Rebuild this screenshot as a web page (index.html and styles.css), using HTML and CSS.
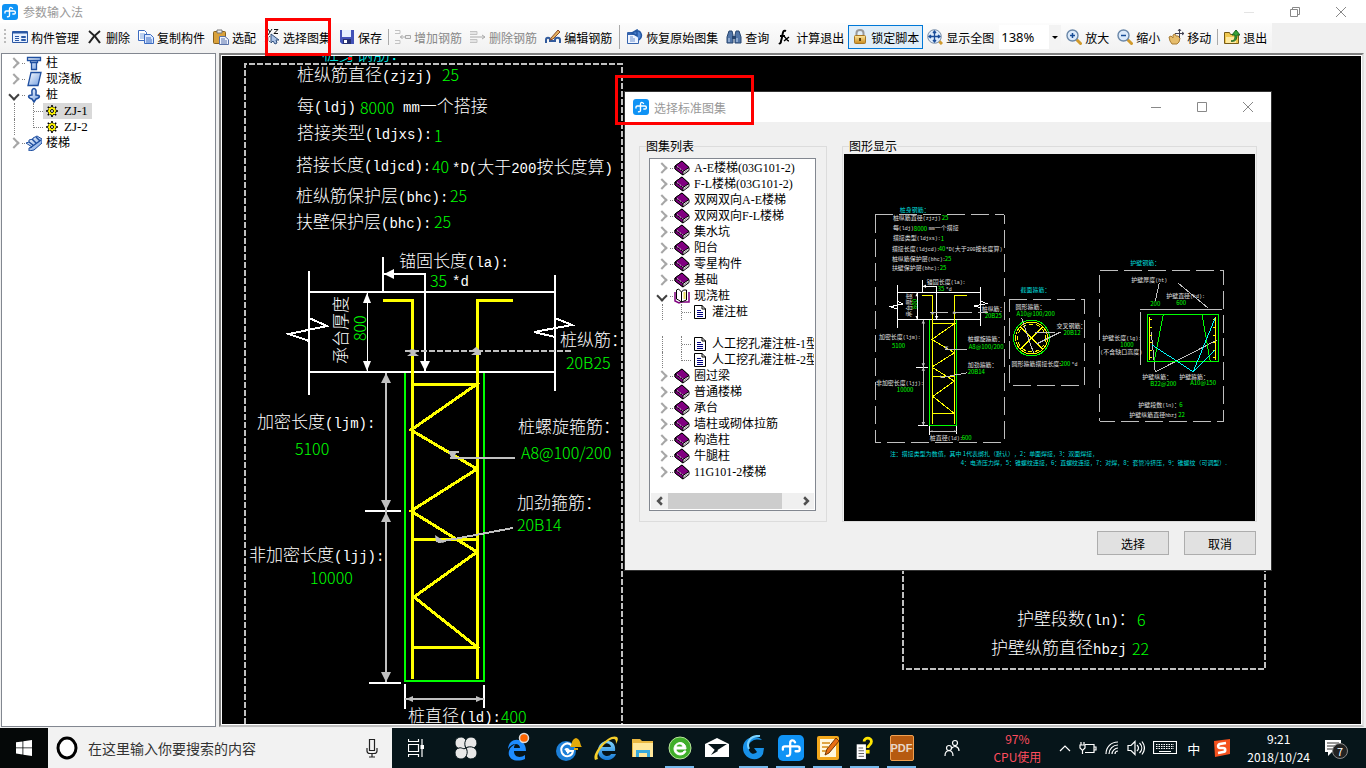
FILE: index.html
```html
<!DOCTYPE html>
<html lang="zh-CN">
<head>
    <meta charset="UTF-8">
    <meta name="viewport" content="width=device-width, initial-scale=1.0"/>
    <title>参数输入法</title>
    <link rel="stylesheet" href="styles.css">
</head>
<body>
<!--shared symbols-->
<svg class="defs" aria-hidden="true">
  <defs>
    <linearGradient id="blueGrad" x1="0" y1="0" x2="1" y2="1"><stop offset="0" stop-color="#fff"/><stop offset="1" stop-color="#6f9ce0"/></linearGradient>
    <linearGradient id="goldGrad" x1="0" y1="0" x2="0" y2="1"><stop offset="0" stop-color="#ffe9a0"/><stop offset="1" stop-color="#c98a1c"/></linearGradient>
    <linearGradient id="ieGrad" x1="0" y1="0" x2="0" y2="1"><stop offset="0" stop-color="#7fd4ff"/><stop offset="1" stop-color="#1377d4"/></linearGradient>
    <symbol id="logo" viewBox="0 0 16 16">
      <rect width="16" height="16" rx="3" fill="#0f93f5"/>
      <path d="M10.500 4.500C9.500 2.800 7.500 3 7.500 5v6c0 1.500-.8 2-2 1.800M3 9V8c0-.8.500-1 1.200-1H12c1 0 1.300.400 1.300 1.200v.8c0 .7-.4 1-1 1h-1.500" fill="none" stroke="#fff" stroke-width="1.400" stroke-linecap="round"/>
    </symbol>
    <symbol id="book" viewBox="0 0 16 16">
      <path d="M1 6l7-5 7 6.500v3L9 15 1 9z" fill="#fff" stroke="#000"/>
      <path d="M1 6l7-5 7 6.500-6 4z" fill="#800080" stroke="#000"/>
      <path d="M1 6v3l8 6v-3.500z" fill="#800080" stroke="#000"/>
      <path d="M3 6.500l6 4.500" stroke="#fff" stroke-dasharray="1 1"/>
      <path d="M10 12.500l5-3.300" stroke="#999"/>
    </symbol>
    <symbol id="bookOpen" viewBox="0 0 16 16">
      <path d="M1 4v9l4 2 2-1h8V4" fill="#fff" stroke="#800080" stroke-width="1.500"/>
      <path d="M2.500 2l2-1 3 3v10l-3-2-2-1zM7.500 4l2-2h3v10l-5 2z" fill="#fff" stroke="#000"/>
      <path d="M10.500 4v7" stroke="#e8e060" stroke-width="2"/>
    </symbol>
    <symbol id="page" viewBox="0 0 12 14">
      <path d="M.5.500H8L11.500 4v9.500H.500z" fill="#fff" stroke="#000"/><path d="M8 0v4h4" fill="none" stroke="#000"/>
      <path d="M3 5.500h4M3 7.500h6M3 9.500h6M3 11.500h6" stroke="#000080"/>
    </symbol>
    <symbol id="gear" viewBox="0 0 12 12">
      <path d="M6 0v12M0 6h12M1.800 1.800l8.400 8.400M10.200 1.800l-8.400 8.400" stroke="#000" stroke-width="1.600"/>
      <circle cx="6" cy="6" r="4" fill="#ffee00" stroke="#000" stroke-dasharray="2 1"/>
      <path d="M6 2v8M2 6h8M3 3l6 6M9 3L3 9" stroke="#ff0" stroke-width="1"/><circle cx="6" cy="6" r="1.500" fill="#fff" stroke="#000"/>
    </symbol>
    <symbol id="magnifier" viewBox="0 0 16 16">
      <path d="M10 10l4.500 4.500" stroke="#d19a2c" stroke-width="3" stroke-linecap="round"/>
      <circle cx="6.500" cy="6.500" r="5.500" fill="#dceafa" stroke="#6a87a8" stroke-width="1.400"/>
    </symbol>

    <!--pile elevation, linework only-->
    <g id="pile">
      <g class="white">
        <path d="M309 271v124M555 275v116M309 292h246M309 372h246"/>
        <path d="M309 318l18 8-38 8 20 7M555 318l17 7-38 7 21 5"/>
        <path d="M383 257v35M425 372v-98h-42"/>
        <path d="M365 511h36M369 683h32M405 684v25M484 685v23"/>
      </g>
      <path class="white thin" d="M367.500 293v78"/>
      <path class="fillwhite" d="M384 274l10-5v10zM425 371l-5-10h10zM367 293l-4 10h8zM367 371l-4-10h8z"/>
      <path class="green" d="M405 373v308h79V373"/>
      <path class="yellow" d="M383 300h29v379M513 300h-36v379M412 384h65l-66 46 66 39-66 42 66 41-63 45 63 50-66 1M412 539h65"/>
      <g class="gray">
        <path d="M386 373v309M405 699h79M515 458h-65M513 528l-75 14"/>
      </g>
      <path class="fillgray" d="M386 373l-5 10h10zM386 510l-5-10h10zM386 512l-5 10h10zM386 682l-5-10h10zM406 699l7-3v6zM483 699l-7-3v6zM448 451h11v2h-3l-1 3 3 3h-6zM435 535l6 4 3 4-8-1zM407 351l5-2 7 2-4 2 4 3h-12l4-3zM471 351l5-4 5 4v4h-10l4-3z"/>
    </g>
  </defs>
</svg>

<div class="app">
  <!--title bar-->
  <header class="titlebar">
    <svg class="app-icon"><use href="#logo"/></svg>
    <h1>参数输入法</h1>
    <div class="win-buttons">
      <button type="button" class="faint" aria-label="最小化"><svg viewBox="0 0 12 12"><path d="M1 6.500h10"/></svg></button>
      <button type="button" aria-label="还原"><svg viewBox="0 0 12 12"><path d="M1.500 3.500h7v7h-7zM3.500 3V1.500h7v7H9"/></svg></button>
      <button type="button" aria-label="关闭"><svg viewBox="0 0 12 12"><path d="M1 1l10 10M11 1L1 11"/></svg></button>
    </div>
  </header>

  <!--toolbar-->
  <div class="toolbar-row">
  <nav class="toolbar">
    <span class="grip"></span>
    <button type="button"><svg viewBox="0 0 16 16"><path d="M.5 2.500h15v11H.500z" fill="#e8f1ff" stroke="#2b58a5"/><path d="M1 3.500h14" stroke="#2b58a5" stroke-width="2"/><path d="M3 7.500h4M3 9.500h4M3 11.500h4" stroke="#2b58a5"/><path d="M9.500 7.500h4v1h-4zM9.500 10.500h4v1h-4z" fill="none" stroke="#2b58a5"/></svg>构件管理</button>
    <button type="button"><svg viewBox="0 0 16 16"><path d="M2 2c4 3 8 7 11 12M13 2C9 5 5 9 2 14" fill="none" stroke="#222" stroke-width="2"/></svg>删除</button>
    <button type="button"><svg viewBox="0 0 16 16"><path d="M.5 1.500h6l2 2v8h-8z" fill="#fff" stroke="#3b6bc0"/><path d="M2 5h5M2 7h5M2 9h5" stroke="#7ba2df"/><path d="M6.500 5.500h6l3 3v6h-9z" fill="#dbe8ff" stroke="#3b6bc0"/><path d="M8 9h5M8 11h6M8 13h6" stroke="#3b6bc0"/></svg>复制构件</button>
    <button type="button"><svg viewBox="0 0 16 16"><rect x=".5" y="2.500" width="12" height="12" rx="1" fill="#d9a13b" stroke="#87601b"/><path d="M4 1h5v3H4z" fill="#eee" stroke="#777"/><path d="M6.500 7.500H12l3.500 3v5h-9z" fill="#eef3ff" stroke="#5871a8"/><path d="M8 10h4M8 12h6M8 14h6" stroke="#5871a8"/></svg>选配</button>
    <button type="button"><svg viewBox="0 0 16 16"><path d="M4 0l2 3M8 0L4 6M10 .5h4l-4 4h4" fill="none" stroke="#111"/><path d="M3.500 5v9M1 7l5 6M1 13l5-6" stroke="#456" stroke-dasharray="2 1"/><path d="M7 5v9l2-2 2 3 2-1-1-3h3z" fill="#a9c1e6" stroke="#33527d"/></svg>选择图集</button>
    <button type="button"><svg viewBox="0 0 16 16"><path d="M1 1h14v14H3l-2-2z" fill="#4252b8"/><path d="M3 1h9v7H3z" fill="#e5efff"/><path d="M4 10h8v5H4z" fill="#26306f"/><path d="M5 11h3v3H5z" fill="#fff"/></svg>保存</button>
    <span class="sep"></span>
    <button type="button" disabled><svg viewBox="0 0 16 16"><path d="M0 1.500h5v3H0M0 11.500h5v3H0" fill="none" stroke="#c3c3c3"/><path d="M5 8h5M7.500 6l-2 2 2 2" fill="none" stroke="#aaa"/><path d="M10.500 6.500h5v3h-5z" fill="#eee" stroke="#aaa"/></svg>增加钢筋</button>
    <button type="button" disabled><svg viewBox="0 0 16 16"><path d="M0 2.500h7v3H0M0 10.500h7v3H0" fill="#e5e5e5" stroke="#c3c3c3"/><path d="M0 8h15M12 6l3 2-3 2" fill="none" stroke="#aaa"/></svg>删除钢筋</button>
    <button type="button"><svg viewBox="0 0 16 16"><path d="M1 14v-3c0-3 4-3 4 0v1h5v-1c0-3 5-3 5 0v3" fill="none" stroke="#315a9c" stroke-width="2"/><path d="M6 9l7-8 2 2-7 7-3 1z" fill="#e4b25e" stroke="#8d4b2d"/></svg>编辑钢筋</button>
    <span class="sep wide"></span>
    <button type="button"><svg viewBox="0 0 16 16"><path d="M.5 3.500h11v11H.500z" fill="#eef4ff" stroke="#3664ad"/><path d="M1 5h10" stroke="#3664ad" stroke-width="2"/><path d="M3 8h3M3 10h5M3 12h5" stroke="#6c92cf"/><path d="M8 3c5-4 9 4 4 8M5 4l5-3v6z" fill="#4d83d1" stroke="#2457a2" stroke-width="1.500"/></svg>恢复原始图集</button>
    <button type="button"><svg viewBox="0 0 16 16"><path d="M3 2h3l1 4v8H1V8zM10 2h3l2 6v6H9V6z" fill="#5276a8" stroke="#27456f"/><path d="M6 7h4v3H6z" fill="#27456f"/><path d="M3 9v4M11 9v4" stroke="#c9dbf3"/></svg>查询</button>
    <button type="button"><svg viewBox="0 0 16 16"><path d="M9 2C5 0 6 7 4 12c0 2-1 3-2 2M3 7h5" fill="none" stroke="#000" stroke-width="2"/><path d="M7 8c2-1 2 4 5 4M12 8l-5 4" fill="none" stroke="#000" stroke-width="1.500"/></svg>计算退出</button>
    <button type="button" class="locked" aria-pressed="true"><svg viewBox="0 0 16 16"><path d="M4.500 7V4c0-4 7-4 7 0v3" fill="none" stroke="#999" stroke-width="2"/><rect x="2.500" y="6.500" width="11" height="8" rx="1" fill="url(#goldGrad)" stroke="#a87724"/><path d="M8 9v3" stroke="#61440e" stroke-width="2"/></svg>锁定脚本</button>
    <button type="button"><svg viewBox="0 0 16 16"><path d="M12 12l3 3" stroke="#d19a2c" stroke-width="3"/><circle cx="7.500" cy="7.500" r="6.800" fill="#dceafa" stroke="#7b8fa8"/><path d="M7.500 2v11M2 7.500h11M6 4l1.500-2L9 4M6 11l1.500 2L9 11M4 6L2 7.500 4 9M11 6l2 1.500L11 9" fill="none" stroke="#1a4c99" stroke-width="1.300"/></svg>显示全图</button>
    <span class="combo">
      <select aria-label="缩放比例"><option>138%</option></select>
      <svg viewBox="0 0 12 24"><path d="M3 11h6l-3 3z"/></svg>
    </span>
    <button type="button"><svg viewBox="0 0 16 16"><use href="#magnifier"/><path d="M6.500 4v5M4 6.500h5" stroke="#174c96" stroke-width="1.500"/></svg>放大</button>
    <button type="button"><svg viewBox="0 0 16 16"><use href="#magnifier"/><path d="M4 6.500h5" stroke="#174c96" stroke-width="1.500"/></svg>缩小</button>
    <button type="button"><svg viewBox="0 0 16 16"><path d="M1 8l2-1 2 2V6l2-1 1 2 2 0 2 2-1 4-2 2H4L2 12z" fill="#e6bd6c" stroke="#a87c34"/><path d="M11.500 0v9M7 4.500h9M10 2l1.500-2L13 2M14 3l2 1.500L14 6" fill="none" stroke="#445"/></svg>移动</button>
    <span class="sep"></span>
    <button type="button"><svg viewBox="0 0 16 16"><path d="M.5 3.500h5l1 2h8v9H.500z" fill="#f1c850" stroke="#765b16"/><path d="M2 8h10v6H2z" fill="#ffeaa0"/><path d="M7 12c4 0 4-3 4-6H8l4-5 4 5h-3c0 5-2 7-6 6z" fill="#37a437" stroke="#17621c"/></svg>退出</button>
  </nav>
  <div class="mark mark-toolbar"></div>
  </div>

  <main class="workspace">
    <!--component tree-->
    <aside class="sidebar">
      <ul class="tree">
        <li><button type="button" class="chev" aria-label="展开"></button><span class="dots"></span><svg class="ico" viewBox="0 0 16 16"><path d="M1.500 2.500h13v3h-13zM4.500 5.500h7v2h-7zM5.500 7.500h5v7h-5z" fill="url(#blueGrad)" stroke="#1f4fa0" stroke-width="1.300"/></svg><span>柱</span></li>
        <li><button type="button" class="chev" aria-label="展开"></button><span class="dots"></span><svg class="ico" viewBox="0 0 16 16"><path d="M5 1.500h10l-3 13H2z" fill="url(#blueGrad)" stroke="#1f4fa0" stroke-width="1.300"/></svg><span>现浇板</span></li>
        <li><button type="button" class="chev open" aria-label="折叠"></button><span class="dots"></span><svg class="ico" viewBox="0 0 16 16"><path d="M6 6c-1-6 5-6 4 0v2c5 0 4 3 0 4l-2 3-2-3c-4-1-5-4 0-4z" fill="url(#blueGrad)" stroke="#1f4fa0" stroke-width="1.500"/></svg><span>桩</span></li>
        <li class="child"><span class="guide"></span><span class="branch"></span><a href="#" class="leaf selected"><svg class="ico small"><use href="#gear"/></svg>ZJ-1</a></li>
        <li class="child last"><span class="guide"></span><span class="branch"></span><a href="#" class="leaf"><svg class="ico small"><use href="#gear"/></svg>ZJ-2</a></li>
        <li><button type="button" class="chev" aria-label="展开"></button><span class="dots"></span><svg class="ico" viewBox="0 0 16 16"><path d="M0 8l3-1V5l4-1V3l4-2 5 3v4l-8 7-5 1v-3l3-1z" fill="url(#blueGrad)" stroke="#1f4fa0"/><path d="M3 7l4 3M6 4l4 4M10 2l4 4M4 13l11-8" stroke="#1f4fa0" stroke-width="1.500"/></svg><span>楼梯</span></li>
      </ul>
    </aside>

    <!--drawing area-->
    <section class="canvas">
      <svg class="drawing" viewBox="222 56 1144 668" aria-label="桩身配筋图">
        <path class="dash" d="M245 740V64h377v676M903 400v269h362V400"/>
        <use href="#pile"/>
        <path class="dash" d="M405 351h166"/>
        <g class="label">
          <text class="cyan" x="322" y="60">桩身钢筋：</text>
          <text x="297" y="81">桩纵筋直径<tspan class="en">(zjzj)</tspan></text>
          <text x="297" y="112">每<tspan class="en">(ldj)</tspan></text>
          <text x="403" y="112"><tspan class="en">mm</tspan>一个搭接</text>
          <text x="297" y="139">搭接类型<tspan class="en">(ldjxs):</tspan></text>
          <text x="296" y="171">搭接长度<tspan class="en">(ldjcd):</tspan></text>
          <text x="452" y="173"><tspan class="en">*D(</tspan>大于<tspan class="en">200</tspan>按长度算<tspan class="en">)</tspan></text>
          <text x="296" y="202">桩纵筋保护层<tspan class="en">(bhc):</tspan></text>
          <text x="296" y="228">扶壁保护层<tspan class="en">(bhc):</tspan></text>
          <text x="399" y="267">锚固长度<tspan class="en">(la):</tspan></text>
          <text x="452" y="286"><tspan class="en">*d</tspan></text>
          <text transform="translate(347 364) rotate(-90)">承台厚度</text>
          <text x="560" y="346">桩纵筋：</text>
          <text x="257" y="428">加密长度<tspan class="en">(ljm):</tspan></text>
          <text x="518" y="433">桩螺旋箍筋：</text>
          <text x="517" y="509">加劲箍筋：</text>
          <text x="249" y="561">非加密长度<tspan class="en">(ljj):</tspan></text>
          <text x="408" y="722">桩直径<tspan class="en">(ld):</tspan></text>
          <text x="1017" y="625">护壁段数<tspan class="en">(ln)</tspan>：</text>
          <text x="991" y="654">护壁纵筋直径<tspan class="en">hbzj</tspan></text>
        </g>
        <g class="value">
          <text x="442" y="81">25</text>
          <text x="360" y="114">8000</text>
          <text x="434" y="142">1</text>
          <text x="432" y="173">40</text>
          <text x="450" y="202">25</text>
          <text x="434" y="228">25</text>
          <text x="430" y="287">35</text>
          <text transform="translate(366 341) rotate(-90)">800</text>
          <text x="566" y="369">20B25</text>
          <text x="295" y="455">5100</text>
          <text x="521" y="459">A8@100/200</text>
          <text x="517" y="531">20B14</text>
          <text x="310" y="584">10000</text>
          <text x="501" y="723">400</text>
          <text x="1137" y="626">6</text>
          <text x="1132" y="655">22</text>
        </g>
        <path class="reddot" d="M348 57h4v3h-4z"/>
      </svg>
    </section>
  </main>

  <!--atlas dialog-->
  <div class="dialog" role="dialog" aria-labelledby="dlgTitle">
    <div class="dialog-title">
      <svg class="app-icon"><use href="#logo"/></svg>
      <h2 id="dlgTitle">选择标准图集</h2>
      <div class="win-buttons">
        <button type="button" aria-label="最小化"><svg viewBox="0 0 12 12"><path d="M1 6.500h10"/></svg></button>
        <button type="button" aria-label="最大化"><svg viewBox="0 0 12 12"><path d="M1.500 1.500h9v9h-9z"/></svg></button>
        <button type="button" aria-label="关闭"><svg viewBox="0 0 12 12"><path d="M1 1l10 10M11 1L1 11"/></svg></button>
      </div>
    </div>
    <div class="dialog-body">
      <fieldset class="group list-group">
        <legend>图集列表</legend>
        <div class="listbox">
          <ul class="tree">
            <li><button type="button" class="chev" aria-label="展开"></button><span class="dots"></span><svg class="ico"><use href="#book"/></svg><span>A-E楼梯(03G101-2)</span></li>
            <li><button type="button" class="chev" aria-label="展开"></button><span class="dots"></span><svg class="ico"><use href="#book"/></svg><span>F-L楼梯(03G101-2)</span></li>
            <li><button type="button" class="chev" aria-label="展开"></button><span class="dots"></span><svg class="ico"><use href="#book"/></svg><span>双网双向A-E楼梯</span></li>
            <li><button type="button" class="chev" aria-label="展开"></button><span class="dots"></span><svg class="ico"><use href="#book"/></svg><span>双网双向F-L楼梯</span></li>
            <li><button type="button" class="chev" aria-label="展开"></button><span class="dots"></span><svg class="ico"><use href="#book"/></svg><span>集水坑</span></li>
            <li><button type="button" class="chev" aria-label="展开"></button><span class="dots"></span><svg class="ico"><use href="#book"/></svg><span>阳台</span></li>
            <li><button type="button" class="chev" aria-label="展开"></button><span class="dots"></span><svg class="ico"><use href="#book"/></svg><span>零星构件</span></li>
            <li><button type="button" class="chev" aria-label="展开"></button><span class="dots"></span><svg class="ico"><use href="#book"/></svg><span>基础</span></li>
            <li><button type="button" class="chev open" aria-label="折叠"></button><span class="dots"></span><svg class="ico"><use href="#bookOpen"/></svg><span>现浇桩</span></li>
            <li class="child"><span class="guide"></span><span class="branch"></span><a href="#" class="leaf"><svg class="ico page"><use href="#page"/></svg>灌注桩</a></li>
            <li class="blank"></li>
            <li class="child"><span class="guide"></span><span class="branch"></span><a href="#" class="leaf"><svg class="ico page"><use href="#page"/></svg>人工挖孔灌注桩-1型</a></li>
            <li class="child last"><span class="guide"></span><span class="branch"></span><a href="#" class="leaf"><svg class="ico page"><use href="#page"/></svg>人工挖孔灌注桩-2型</a></li>
            <li><button type="button" class="chev" aria-label="展开"></button><span class="dots"></span><svg class="ico"><use href="#book"/></svg><span>圈过梁</span></li>
            <li><button type="button" class="chev" aria-label="展开"></button><span class="dots"></span><svg class="ico"><use href="#book"/></svg><span>普通楼梯</span></li>
            <li><button type="button" class="chev" aria-label="展开"></button><span class="dots"></span><svg class="ico"><use href="#book"/></svg><span>承台</span></li>
            <li><button type="button" class="chev" aria-label="展开"></button><span class="dots"></span><svg class="ico"><use href="#book"/></svg><span>墙柱或砌体拉筋</span></li>
            <li><button type="button" class="chev" aria-label="展开"></button><span class="dots"></span><svg class="ico"><use href="#book"/></svg><span>构造柱</span></li>
            <li><button type="button" class="chev" aria-label="展开"></button><span class="dots"></span><svg class="ico"><use href="#book"/></svg><span>牛腿柱</span></li>
            <li><button type="button" class="chev" aria-label="展开"></button><span class="dots"></span><svg class="ico"><use href="#book"/></svg><span>11G101-2楼梯</span></li>
          </ul>
          <div class="hscroll">
            <button type="button" aria-label="向左"><svg viewBox="0 0 8 8"><path d="M5.500 1l-3 3 3 3"/></svg></button>
            <div class="track"><div class="thumb"></div></div>
            <button type="button" aria-label="向右"><svg viewBox="0 0 8 8"><path d="M2.500 1l3 3-3 3"/></svg></button>
          </div>
        </div>
      </fieldset>

      <fieldset class="group view-group">
        <legend>图形显示</legend>
        <svg class="preview" viewBox="844 154 412 367" aria-label="图集预览">
          <path class="frame" d="M875.500 214.500h129v228h-129zM1009.500 299.500h76v86h-76zM1100.500 270.500h124v151h-124z"/>
          <use href="#pile" transform="translate(791.500 192.400) scale(.342)"/>
          <path class="frame" d="M930 312.500h58"/>
          <!--round section-->
          <circle class="green" cx="1032" cy="338" r="18"/>
          <circle class="yellow" cx="1032" cy="338" r="16"/>
          <circle class="yellow rebar" cx="1032" cy="338" r="14"/>
          <path class="yellow" d="M1021 327l22 22M1043 327l-22 22"/>
          <path class="gray" d="M1022 318l12 35M1056 332h-21M1061 332l-24 12"/>
          <!--wall section-->
          <path class="gray" d="M1141 309.500h82M1141.500 312v53M1160 283l-4 18M1179 283l30 25M1152 332l4 40 62-32"/>
          <path class="green" d="M1148.500 314.500h71v47h-71zM1164 315l-9 46M1203 315l8 46"/>
          <path class="yellow" d="M1150.500 317v43M1216.500 317v43"/>
          <path class="yellow" d="M1151 319h2M1151 327h2M1151 335h2M1151 343h2M1151 351h2M1151 358h2M1214 319h2M1214 327h2M1214 335h2M1214 343h2M1214 351h2M1214 358h2"/>
          <path class="cyanline" d="M1153 345l41 27 22-54M1194 372l22-22"/>
          <g class="label">
            <text x="893" y="220">桩纵筋直径<tspan class="en">(zjzj)</tspan></text>
            <text x="893" y="230">每<tspan class="en">(ldj)</tspan></text>
            <text x="929" y="230"><tspan class="en">mm</tspan>一个搭接</text>
            <text x="893" y="240">搭接类型<tspan class="en">(ldjxs):</tspan></text>
            <text x="892" y="251">搭接长度<tspan class="en">(ldjcd):</tspan></text>
            <text x="946" y="251"><tspan class="en">*D(</tspan>大于<tspan class="en">200</tspan>按长度算<tspan class="en">)</tspan></text>
            <text x="892" y="261">桩纵筋保护层<tspan class="en">(bhc):</tspan></text>
            <text x="892" y="270">扶壁保护层<tspan class="en">(bhc):</tspan></text>
            <text x="927" y="284">锚固长度<tspan class="en">(la):</tspan></text>
            <text x="946" y="291"><tspan class="en">*d</tspan></text>
            <text transform="translate(911 317) rotate(-90)">承台厚度</text>
            <text x="982" y="311">桩纵筋：</text>
            <text x="879" y="339">加密长度<tspan class="en">(ljm):</tspan></text>
            <text x="968" y="341">桩螺旋箍筋：</text>
            <text x="968" y="367">加劲箍筋：</text>
            <text x="876" y="385">非加密长度<tspan class="en">(ljj):</tspan></text>
            <text x="930" y="440">桩直径<tspan class="en">(ld):</tspan></text>
            <text x="1016" y="309">圆形箍筋：</text>
            <text x="1057" y="328">交叉钢筋：</text>
            <text x="1012" y="366">圆形箍筋搭接长度:</text>
            <text x="1072" y="366"><tspan class="en">*d</tspan></text>
            <text x="1132" y="282">护壁厚度<tspan class="en">(ht)</tspan></text>
            <text x="1167" y="298">护壁直径<tspan class="en">(kd):</tspan></text>
            <text x="1103" y="340">护壁长度<tspan class="en">(lg):</tspan></text>
            <text x="1101" y="354"><tspan class="en">(</tspan>不含缺口高度<tspan class="en">)</tspan></text>
            <text x="1143" y="379">护壁纵筋：</text>
            <text x="1180" y="379">护壁箍筋：</text>
            <text x="1139" y="407">护壁段数<tspan class="en">(ln)</tspan>：</text>
            <text x="1130" y="417">护壁纵筋直径<tspan class="en">hbzj</tspan></text>
          </g>
          <g class="value">
            <text x="942" y="220">25</text>
            <text x="914" y="231">8000</text>
            <text x="941" y="241">1</text>
            <text x="939" y="251">40</text>
            <text x="945" y="261">25</text>
            <text x="940" y="270">25</text>
            <text x="938" y="291">35</text>
            <text transform="translate(917 309) rotate(-90)">800</text>
            <text x="985" y="318">20B25</text>
            <text x="892" y="348">5100</text>
            <text x="969" y="349">A8@100/200</text>
            <text x="968" y="374">20B14</text>
            <text x="897" y="392">10000</text>
            <text x="962" y="440">600</text>
            <text x="1017" y="316">A10@100/200</text>
            <text x="1064" y="335">20B12</text>
            <text x="1061" y="366">200</text>
            <text x="1151" y="306">200</text>
            <text x="1177" y="305">600</text>
            <text x="1121" y="347">1000</text>
            <text x="1151" y="386">B22@200</text>
            <text x="1191" y="385">A10@150</text>
            <text x="1180" y="407">6</text>
            <text x="1179" y="417">22</text>
          </g>
          <g class="note">
            <text x="900" y="212">桩身钢筋：</text>
            <text x="1021" y="292">截面箍筋：</text>
            <text x="1131" y="265">护壁钢筋：</text>
            <text x="890" y="456">注：搭接类型为数值，其中 1代表绑扎（默认），2：单面焊接，3：双面焊接，</text>
            <text x="961" y="465">4：电渣压力焊，5：锥螺纹连接，6：直螺纹连接，7：对焊，8：套管冷挤压，9：锥螺纹（可调型）.</text>
          </g>
        </svg>
      </fieldset>
    </div>
    <div class="dialog-actions">
      <button type="button">选择</button>
      <button type="button">取消</button>
    </div>
  </div>
  <div class="mark mark-dialog"></div>

  <!--taskbar-->
  <footer class="taskbar">
    <button type="button" class="start" aria-label="开始"><svg width="16" height="16" viewBox="0 0 16 16"><path d="M0 2.300l6.500-.9v6.100H0zM7.300 1.300L16 0v7.500H7.300zM0 8.300h6.500v6.200L0 13.600zM7.300 8.300H16V16l-8.700-1.300z" fill="#fff"/></svg></button>
    <label class="search">
      <svg width="22" height="26" viewBox="0 0 22 26"><ellipse cx="11" cy="13" rx="9" ry="10" fill="#fff" stroke="#000" stroke-width="3"/></svg>
      <input type="text" placeholder="在这里输入你要搜索的内容" aria-label="搜索">
      <svg width="12" height="20" viewBox="0 0 12 20"><path d="M3.500 1.500h5v11h-5zM1 10v3c0 1.500 1 2.500 3 2.500h4c2 0 3-1 3-2.500v-3M6 16v3M3 19h6" fill="none" stroke="#222" stroke-width="1.200"/></svg>
    </label>
    <button type="button" class="task first" aria-label="任务视图"><svg width="16" height="18" viewBox="0 0 16 18"><path d="M.5 0v2.500h10V0M.500 5.500h10v7H.500zM.500 18v-2.500h10V18M14 0v18" fill="none" stroke="#fff" stroke-width="1.200"/><path d="M12.500 6h3.500v4h-3.500z" fill="#fff"/></svg></button>
    <button type="button" class="task wide" aria-label="风扇"><svg width="24" height="24" viewBox="0 0 24 24"><g fill="#e8e8e8" stroke="#06151a"><path d="M12 12C7 15 1 12 1 7c0-7 10-8 11-2 1 3-2 4 0 7z"/><path d="M12 12C9 7 12 1 17 1c7 0 8 10 2 11-3 1-4-2-7 0z"/><path d="M12 12c5-3 11 0 11 5 0 7-10 8-11 2-1-3 2-4 0-7z"/><path d="M12 12c3 5 0 11-5 11-7 0-8-10-2-11 3-1 4 2 7 0z"/></g></svg></button>
    <button type="button" class="task wide" aria-label="Edge"><svg width="24" height="32" viewBox="0 0 24 32"><path d="M2 17C3 4 20 5 20 19H8c0 7 7 7 11 4v4C10 31 1 27 3 19c1-4 4-6 7-7-2 1-2 3-2 4h6c0-5-8-6-12 1z" fill="#1e8cff"/><circle cx="18" cy="6" r="4.500" fill="#f60" stroke="#ddd" stroke-width="1.500"/></svg></button>
    <span class="gap"></span>
    <button type="button" class="task" aria-label="浏览器"><svg width="28" height="30" viewBox="0 0 28 30"><circle cx="11" cy="18" r="10" fill="#1c7fd8"/><path d="M17 13c-5-6-13 0-10 7 3 5 10 4 11-2h-7M10 17c3-3 6 2 2 3" fill="none" stroke="#fff" stroke-width="2"/><path d="M15 14c2-1 1-8 6-9 5 1 4 8 6 9zM19 15h4v2h-4z" fill="#e5ab09"/></svg></button>
    <button type="button" class="task" aria-label="Internet Explorer"><svg width="26" height="28" viewBox="0 0 26 28"><path d="M22 17H9c0 6 8 6 9 3h5c-4 10-19 7-18-4C6 4 24 4 22 17zM9 13h9c-1-5-8-5-9 0z" fill="url(#ieGrad)"/><path d="M2 26C-2 19 16-1 24 3c2 2 0 5-1 7 0-3 0-5-3-5C13 6 2 20 5 25z" fill="#f5cf2c"/></svg></button>
    <button type="button" class="task" aria-label="文件资源管理器"><svg width="22" height="20" viewBox="0 0 22 20"><path d="M0 1h8l2 2h11v16H0z" fill="#e9b741"/><path d="M1 5h20v14H1z" fill="#ffe79a"/><path d="M4 19v-7h14v7h-3v-4H7v4z" fill="#38a9dc"/></svg></button>
    <button type="button" class="task running" aria-label="360浏览器"><svg width="24" height="24" viewBox="0 0 24 24"><circle cx="12" cy="12" r="11" fill="#3fae2a" stroke="#b7e59b"/><path d="M18 13H8c0 5 7 5 8 2h2c-2 6-12 5-12-2 0-8 12-9 12 0zM8 11h7c-1-4-6-4-7 0z" fill="#fff" stroke="#fff"/></svg></button>
    <button type="button" class="task" aria-label="邮件"><svg width="24" height="20" viewBox="0 0 24 20"><path d="M0 6l12-6 12 6v13H0z" fill="#fff"/><path d="M3 6h19L11 13z" fill="#06151a"/><path d="M11 10l2 3-7 4z" fill="#06151a"/></svg></button>
    <button type="button" class="task running" aria-label="广联达"><svg width="24" height="26" viewBox="0 0 24 26"><path d="M20 5C16 0 2 1 1 12c-1 12 15 17 20 7l1-6H12l3 4c-5 5-10-2-8-7 2-6 9-6 13-5z" fill="#1891e8"/><path d="M18 1C8 0 4 8 7 14" fill="none" stroke="#7ad2ff" stroke-width="2"/></svg></button>
    <button type="button" class="task running" aria-label="参数输入法"><svg width="26" height="26"><use href="#logo"/></svg></button>
    <button type="button" class="task running" aria-label="记事"><svg width="24" height="26" viewBox="0 0 24 26"><rect x="1" y="1" width="22" height="24" rx="2" fill="#f3a81c"/><path d="M4 4h16v18H4z" fill="#fff8dc"/><path d="M6 8h8M6 12h6M6 16h5" stroke="#d58b11" stroke-width="1.500"/><path d="M9 20l2-6L20 3l3 3-10 12z" fill="#e86f14" stroke="#753500"/></svg></button>
    <button type="button" class="task running" aria-label="帮助"><svg width="20" height="24" viewBox="0 0 20 26"><path d="M1 9h10v16H1z" fill="#fff"/><path d="M3 13h5M3 16h6M3 19h6M3 22h6" stroke="#555"/><path d="M9 6c0-5 8-5 8 0 0 4-4 4-4 7" fill="none" stroke="#ffe600" stroke-width="3"/><path d="M11 15h4v4h-4z" fill="#ffe600"/></svg></button>
    <button type="button" class="task running pdf" aria-label="PDF"><span>PDF</span></button>

    <div class="tray">
      <button type="button" class="people" aria-label="人脉"><svg width="16" height="18" viewBox="0 0 16 18"><g fill="none" stroke="#fff" stroke-width="1.200"><circle cx="5" cy="9" r="2.500"/><path d="M1 17c0-7 8-7 8 0"/><circle cx="11" cy="4" r="2.500"/><path d="M8 9c3-3 7-1 7 3"/></g></svg></button>
      <div class="cpu"><span>97%</span><span>CPU使用</span></div>
      <button type="button" aria-label="显示隐藏的图标"><svg width="12" height="8" viewBox="0 0 12 8"><path d="M1 7l5-5 5 5" class="line"/></svg></button>
      <button type="button" aria-label="电池"><svg width="18" height="14" viewBox="0 0 18 14"><path d="M6 3.500h9v8H6M15 6h2v3h-2M2 1v3M5 1v3M1 4h5v3L4 9H3L1 7zM3.500 9v4" class="line"/></svg></button>
      <button type="button" aria-label="网络"><svg width="14" height="14" viewBox="0 0 14 14"><path d="M1 13C1 6 6 1 13 1M4 13c0-5 4-9 9-9M7 13c0-3 3-6 6-6M10 13c0-2 1-3 3-3" class="line"/></svg></button>
      <button type="button" aria-label="音量"><svg width="18" height="16" viewBox="0 0 18 16"><path d="M1 5.500h3l4-4v13l-4-4H1zM10 5c2 2 2 4 0 6M12.500 3c3 3 3 7 0 10M15 1.500c3 4 3 9 0 13" class="line"/></svg></button>
      <button type="button" aria-label="键盘"><svg width="24" height="14" viewBox="0 0 24 14"><path d="M.5.500h23v12H.500zM6 10.500h12" class="line"/><path d="M3 3.500h18M3 5.500h18M3 7.500h18" class="line" stroke-dasharray="1.500 1"/></svg></button>
      <button type="button" class="ime">中</button>
      <button type="button" aria-label="搜狗输入法"><svg width="16" height="18" viewBox="0 0 16 18"><path d="M0 2l16-2v15L1 18z" fill="#f4511e"/><path d="M12 4L6 5c-3 1-2 4 0 4h3c3 0 3 4 0 4l-5 1" fill="none" stroke="#fff" stroke-width="2.500"/></svg></button>
      <time class="clock"><span>9:21</span><span>2018/10/24</span></time>
      <button type="button" class="notice" aria-label="通知"><svg width="18" height="18" viewBox="0 0 18 18"><path d="M1 1h16v12H8l-4 4v-4H1z" fill="#fff"/><path d="M3 4h12M3 7h12M3 10h7" stroke="#333"/></svg><span class="badge">7</span></button>
    </div>
  </footer>
</div>
</body>
</html>
```
FILE: styles.css
```css
* {
  box-sizing: border-box;
}
body {
  margin: 0;
  font-family: "Noto Sans CJK SC", sans-serif;
  font-size: 12px;
  color: #000;
  background: #f0f0f0;
}
button {
  border: 0;
  padding: 0;
  background: none;
  font: inherit;
  color: inherit;
}
h1, h2 {
  margin: 0;
  font-size: 12px;
  font-weight: 400;
  color: #999;
}
.defs {
  position: absolute;
  width: 0;
  height: 0;
}
.app {
  position: relative;
  display: flex;
  flex-direction: column;
  height: 100vh;
  overflow: hidden;
}

/* title bars */
.titlebar {
  display: flex;
  align-items: center;
  height: 23px;
  padding: 0 2px;
  background: #fff;
}
.app-icon {
  width: 16px;
  height: 16px;
  margin-right: 5px;
}
.win-buttons {
  display: flex;
  margin-left: auto;
}
.win-buttons button {
  display: flex;
  justify-content: center;
  width: 46px;
}
.win-buttons svg {
  width: 12px;
  height: 12px;
  fill: none;
  stroke: #888;
}
.win-buttons .faint svg { stroke: #e4e4e4; }

/* toolbar */
.toolbar-row {
  position: relative;
  display: flex;
  height: 30px;
}
.toolbar {
  display: flex;
  align-items: center;
  padding: 0 1px 2px 4px;
  background: linear-gradient(#fcfcfc, #f1f1f1);
}
.toolbar button {
  display: flex;
  align-items: center;
  gap: 3px;
  height: 24px;
  padding: 0 3px;
  border: 1px solid transparent;
  white-space: nowrap;
}
.toolbar button svg {
  width: 16px;
  height: 16px;
}
.toolbar button:disabled { color: #888; }
.toolbar .locked {
  border-color: #0078d7;
  background: #e0eef9;
}
.grip {
  width: 2px;
  height: 16px;
  margin-right: 2px;
  background: repeating-linear-gradient(#bbb 0 2px, transparent 2px 4px);
}
.sep {
  width: 1px;
  height: 16px;
  margin: 0 2px;
  background: #aaa;
}
.sep.wide {
  height: 24px;
  margin: 0 3px;
}
.combo {
  position: relative;
  display: flex;
  width: 62px;
  height: 24px;
  margin: 0 1px;
  background: #fff;
}
.combo select {
  width: 100%;
  border: 0;
  padding: 0 2px;
  appearance: none;
  background: none;
  font: 13px "Noto Sans", sans-serif;
}
.combo svg {
  position: absolute;
  top: 0;
  right: 0;
  width: 12px;
  height: 24px;
  background: #f3f3f3;
}

/* red marker frames */
.mark {
  position: absolute;
  z-index: 3;
  border: 3px solid #f00;
}
.mark-toolbar {
  left: 265px;
  top: -5px;
  width: 66px;
  height: 38px;
}
.mark-dialog {
  left: 615px;
  top: 75px;
  width: 139px;
  height: 50px;
}

/* workspace */
.workspace {
  display: flex;
  flex: 1;
  gap: 3px;
  min-height: 0;
  padding: 0 2px 1px 1px;
}
.sidebar {
  width: 215px;
  border: 1px solid #828790;
  padding-top: 1px;
  background: #fff;
}
.canvas {
  flex: 1;
  min-width: 0;
  overflow: hidden;
  border: 2px solid #808080;
  border-right-color: #e0e0e0;
  border-bottom-color: #c0c0c0;
  outline: 1px solid #fff;
  outline-offset: -3px;
  padding: 1px;
  background: #000;
}
.drawing {
  display: block;
  width: 1144px;
  height: 668px;
}

/* trees */
.tree {
  margin: 0;
  padding: 0;
  list-style: none;
  font-family: "Liberation Serif", "Noto Sans CJK SC", serif;
  line-height: 16px;
}
.tree li {
  display: flex;
  align-items: center;
  height: 16px;
  padding-left: 7px;
  white-space: nowrap;
}
.tree li > * { flex-shrink: 0; }
.chev {
  display: flex;
  justify-content: center;
  width: 10px;
}
.chev::before {
  content: "";
  width: 6px;
  height: 6px;
  border: solid #a6a6a6;
  border-width: 2px 2px 0 0;
  transform: rotate(45deg);
}
.chev.open::before {
  border-color: #404040;
  transform: rotate(135deg);
}
.dots {
  width: 3px;
  margin: 0 1px 0 3px;
  border-top: 1px dotted #808080;
}
.ico {
  width: 16px;
  height: 16px;
  margin-right: 4px;
}
.guide {
  width: 1px;
  height: 16px;
  margin-left: 5px;
  border-left: 1px dotted #808080;
}
.branch {
  align-self: flex-start;
  width: 10px;
  height: 16px;
  margin-left: 18px;
  border-left: 1px dotted #808080;
  background: repeating-linear-gradient(90deg, #808080 0 1px, transparent 1px 2px) 0 8px / 100% 1px no-repeat;
}
.last .branch { height: 9px; }
.leaf {
  display: flex;
  align-items: center;
  height: 16px;
  padding: 0 4px 0 3px;
  color: #000;
  text-decoration: none;
}
.leaf.selected { background: #d9d9d9; }
.ico.small {
  width: 12px;
  height: 12px;
  margin-right: 6px;
}
.sidebar .leaf { font-size: 13px; }
.ico.page {
  width: 12px;
  height: 14px;
  margin-right: 6px;
}

/* drawing pens */
.drawing, .preview {
  --pen: 2px;
  --bar: 3px;
  --fine: 1px;
  --ink: #fff;
  --mark: #0f0;
  --size: 17px;
  --ensize: 14px;
  --numsize: 16px;
  --weight: 300;
}
.preview {
  --pen: 1px;
  --bar: 1px;
  --ink: #e0e0e0;
  --mark: #0f0;
  --size: 6px;
  --ensize: 5px;
  --numsize: 6px;
  --weight: 400;
}
.white, .gray, .green, .yellow, .dash, .frame, .cyanline {
  fill: none;
  stroke-width: var(--pen);
  shape-rendering: crispEdges;
}
.white *, .gray *, .white, .gray, .green, .yellow { vector-effect: non-scaling-stroke; }
.white { stroke: #fff; }
.thin { stroke-width: var(--fine); }
.gray { stroke: #c0c0c0; }
.green { stroke: #0f0; }
.yellow { stroke: #ff0; stroke-width: var(--bar); }
.cyanline { stroke: #0ff; }
.rebar { stroke-dasharray: 4 3; }
.fillwhite { fill: #fff; }
.fillgray { fill: #c0c0c0; }
.dash { stroke: #c0c0c0; stroke-dasharray: 6 2; }
.frame { stroke: #c0c0c0; stroke-dasharray: 18 6; }
.reddot { fill: #f00; }
.label, .note { fill: var(--ink); font-size: var(--size); font-weight: var(--weight); }
.value { fill: var(--mark); font-size: var(--numsize); font-weight: var(--weight); }
.en { font-family: "Liberation Mono", monospace; font-size: var(--ensize); }
.note { fill: #00dcdc; }
.cyan { fill: #0ff; }

/* dialog */
.dialog {
  position: absolute;
  left: 624px;
  top: 91px;
  display: flex;
  flex-direction: column;
  width: 648px;
  border: 1px solid #333;
  background: #f0f0f0;
}
.dialog-title {
  display: flex;
  align-items: center;
  height: 30px;
  padding-left: 8px;
  background: #fff;
}
.dialog-body {
  display: flex;
  gap: 15px;
  padding: 16px 14px 0;
}
.group {
  min-width: 0;
  height: 384px;
  margin: 0;
  padding: 0;
  border: 1px solid #dcdcdc;
}
.group legend {
  height: 16px;
  padding: 0;
  line-height: 16px;
}
.list-group {
  width: 188px;
  padding: 4px 10px 9px 9px;
}
.list-group legend { margin-left: -3px; }
.view-group {
  flex: 1;
  padding: 0 1px;
}
.view-group legend { margin-left: 5px; }
.listbox {
  display: flex;
  flex-direction: column;
  height: 353px;
  border: 1px solid #828790;
  padding: 1px;
  overflow: hidden;
  background: #fff;
}
.listbox .tree {
  flex: 1;
  overflow: hidden;
}
.listbox .tree li { padding-left: 6px; }
.hscroll {
  display: flex;
  height: 16px;
  background: #f0f0f0;
}
.hscroll button {
  display: flex;
  align-items: center;
  justify-content: center;
  width: 17px;
}
.hscroll svg {
  width: 10px;
  height: 10px;
  fill: none;
  stroke: #505050;
  stroke-width: 2;
}
.track { flex: 1; }
.thumb {
  width: 88%;
  height: 16px;
  background: #cdcdcd;
}
.preview {
  display: block;
  width: 100%;
  height: 367px;
  background: #000;
}
.dialog-actions {
  display: flex;
  justify-content: flex-end;
  gap: 15px;
  padding: 9px 15px 15px;
}
.dialog-actions button {
  width: 72px;
  height: 24px;
  border: 1px solid #adadad;
  background: #e1e1e1;
}

/* taskbar */
.taskbar {
  display: flex;
  height: 40px;
  color: #fff;
  background: #06151a;
}
.taskbar button {
  display: flex;
  align-items: center;
  justify-content: center;
}
.start {
  width: 48px;
  background: #050808;
}
.search {
  display: flex;
  align-items: center;
  width: 344px;
  padding: 0 14px 0 8px;
  background: #f2f2f2;
}
.search input {
  flex: 1;
  min-width: 0;
  border: 0;
  padding: 0 10px;
  background: none;
  font: 14px "Noto Sans CJK SC", sans-serif;
}
.search input::placeholder { color: #333; }
.task {
  width: 37px;
  border-bottom: 2px solid transparent;
}
.taskbar .task {
  border-top: 2px solid transparent;
}
.task.first { width: 48px; }
.task.wide { width: 52px; }
.gap { width: 6px; }
.taskbar .running {
  width: 29px;
  margin: 0 4px;
  border-bottom-color: #76b9ed;
}
.pdf span {
  width: 24px;
  height: 26px;
  border: 1px solid #f0a050;
  border-radius: 2px;
  background: #b65a10;
  color: #e8d8c8;
  font: bold 11px/24px "Liberation Sans", sans-serif;
}
.tray {
  display: flex;
  align-items: center;
  gap: 8px;
  margin-left: auto;
  padding-right: 24px;
}
.line {
  fill: none;
  stroke: #fff;
  stroke-width: 1.2;
}
.people { margin-right: 25px; }
.cpu, .clock {
  display: flex;
  flex-direction: column;
  align-items: center;
  line-height: 18px;
}
.cpu {
  margin-right: 10px;
  color: #ff4d5e;
}
.clock { margin: 0 6px 0 9px; }
.ime {
  margin: 0 6px 0 2px;
  font-size: 13px;
}
.notice { position: relative; }
.badge {
  position: absolute;
  left: 8px;
  top: 4px;
  width: 16px;
  height: 16px;
  border: 1px solid #888;
  border-radius: 8px;
  background: #222;
  font-size: 11px;
  line-height: 14px;
}
```
